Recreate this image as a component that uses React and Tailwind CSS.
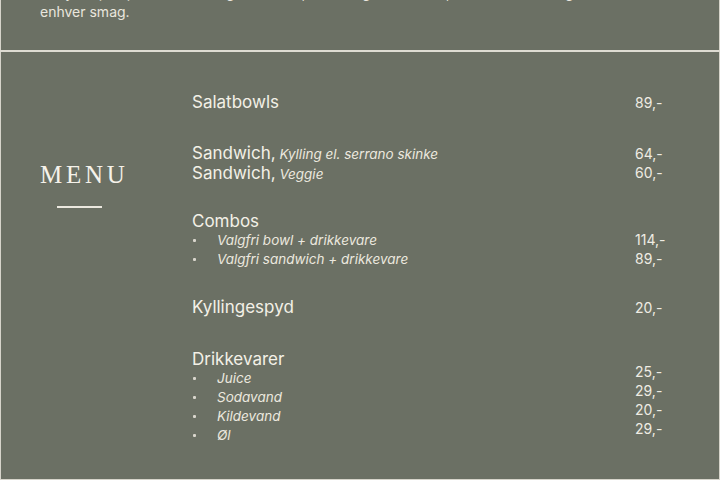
import React from 'react';

const groups = [
  {
    lines: [{ title: 'Salatbowls' }],
    prices: ['89,-'],
    pricePad: 'pt-0',
    gap: 'mt-0',
  },
  {
    lines: [
      { title: 'Sandwich,', note: 'Kylling el. serrano skinke' },
      { title: 'Sandwich,', note: 'Veggie' },
    ],
    prices: ['64,-', '60,-'],
    pricePad: 'pt-0',
    gap: 'mt-[32px]',
  },
  {
    lines: [{ title: 'Combos' }],
    items: ['Valgfri bowl + drikkevare', 'Valgfri sandwich + drikkevare'],
    prices: ['114,-', '89,-'],
    pricePad: 'pt-[18px]',
    gap: 'mt-[28px]',
  },
  {
    lines: [{ title: 'Kyllingespyd' }],
    prices: ['20,-'],
    pricePad: 'pt-0',
    gap: 'mt-[29px]',
  },
  {
    lines: [{ title: 'Drikkevarer' }],
    items: ['Juice', 'Sodavand', 'Kildevand', 'Øl'],
    prices: ['25,-', '29,-', '20,-', '29,-'],
    pricePad: 'pt-[12px]',
    gap: 'mt-[33px]',
  },
];

export default function App() {
  return (
    <div className="w-[720px] h-[480px] overflow-hidden bg-[#6b7064] text-[#f3f0e7] font-['Inter','Liberation_Sans',sans-serif]">
      {/* intro text, scrolled partly out of view */}
      <section className="h-[50px] border-x border-[#d6d4ca] pl-[39px] pr-[40px] overflow-hidden">
        <p className="-mt-[17px] text-[14px] leading-[19px] text-[#e9e6dd]">
          Vi byder på sprøde salater og sandwich, lavet af gode råvarer, så der altid er noget for
          <br />
          enhver smag.
        </p>
      </section>
      <div className="h-[2px] bg-[#dedcd2]" />

      {/* menu */}
      <section className="h-[428px] border-x border-b border-[#d6d4ca] flex">
        <div className="w-[191px] shrink-0 pl-[39px] pt-[108px]">
          <h2 className="font-['Liberation_Serif',serif] text-[25px] leading-[30px] tracking-[0.15em] text-[#f5f2ea]">
            MENU
          </h2>
          <div className="mt-[16px] ml-[17px] w-[45px] h-[2px] bg-[#ebe8df]" />
        </div>

        <div className="flex-1 pt-[41px]">
          {groups.map((g, gi) => (
            <div key={gi} className={`flex ${g.gap}`}>
              <div className="flex-1">
                {g.lines.map((l, li) => (
                  <div key={li} className="text-[17px] leading-[19px] whitespace-nowrap">
                    {l.title}
                    {l.note && (
                      <span className="italic text-[13.5px] text-[#ebe8df]"> {l.note}</span>
                    )}
                  </div>
                ))}
                {g.items && (
                  <ul>
                    {g.items.map((it) => (
                      <li key={it} className="flex items-center text-[13.5px] leading-[19px] italic text-[#ebe8df]">
                        <span className="w-[3px] h-[3px] rounded-[1px] bg-[#d9d6cd] ml-[1px] mr-[21px] shrink-0" />
                        {it}
                      </li>
                    ))}
                  </ul>
                )}
              </div>
              <div className={`w-[84px] shrink-0 ${g.pricePad}`}>
                {g.prices.map((p, pi) => (
                  <div key={pi} className="text-[14px] leading-[19px] text-[#efece3]">
                    {p}
                  </div>
                ))}
              </div>
            </div>
          ))}
        </div>
      </section>
    </div>
  );
}
